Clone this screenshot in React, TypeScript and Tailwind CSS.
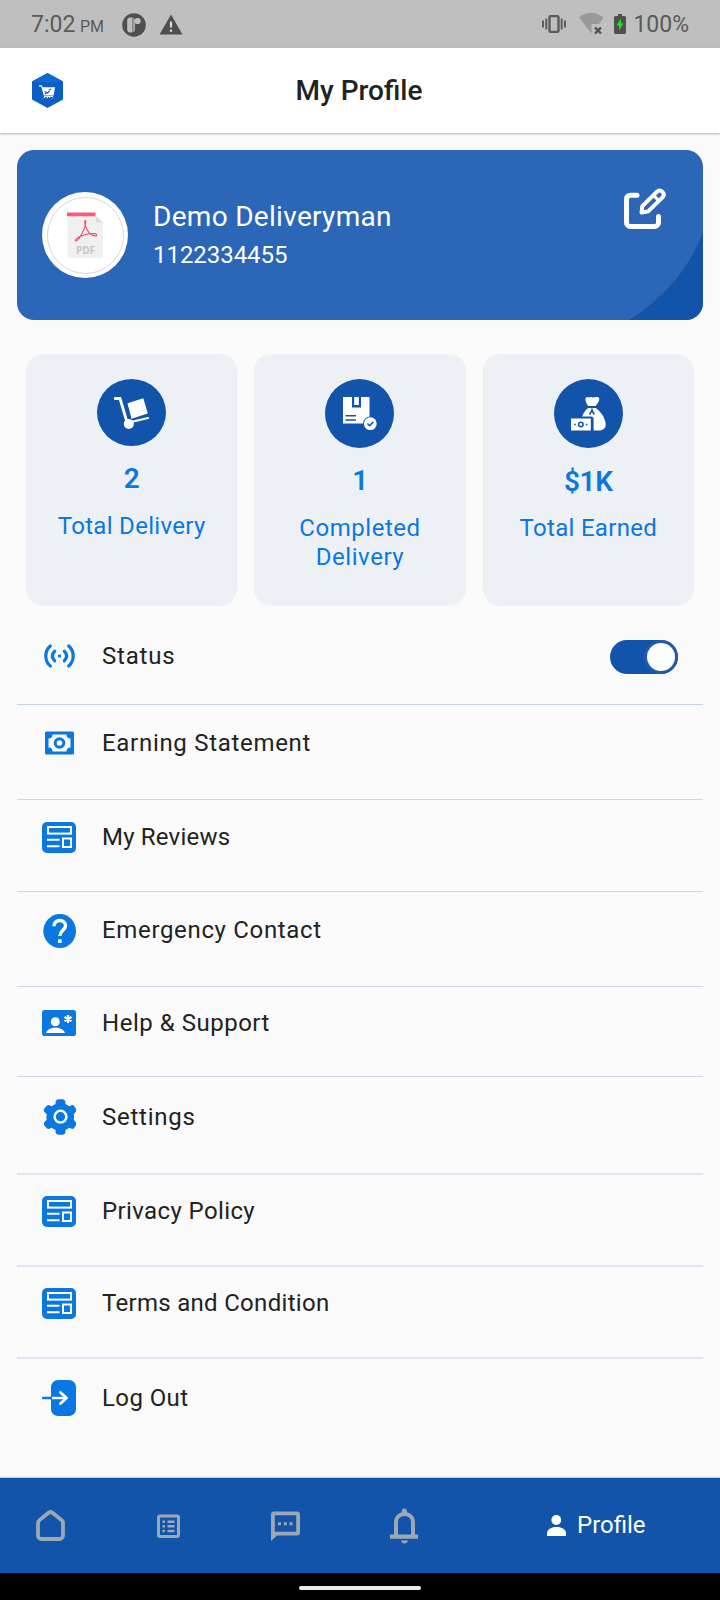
import React, { useState } from 'react';

function LogoIcon() {
  return (
    <svg width="31" height="35" viewBox="0 0 31 35" fill="none">
      <path d="M15.5 0 31 8.5V26.5L15.5 35 0 26.5V8.5Z" fill="#0b5fc4" />
      <path d="M15.5 0 31 8.5 15.5 10 0 8.5Z" fill="#1268cc" />
      <path d="M7 12.2h2.8l.8 2H23l-1.4 8.2H11.8L9.2 13.5H7z" fill="#fff" />
      <path d="m12.500 18.500 2.500 1M15 20.500l2.500-2.500M13 21l1.500-1M17 17l2-1" stroke="#0b5fc4" strokeWidth="1.200" />
      <path d="M12 23.5h9M11.5 25l2-1M15 25.5l1-2M18 25l-1-1M20 25.5l1-1" stroke="#d6e6f8" strokeWidth="1" />
    </svg>
  );
}

function PdfIcon() {
  return (
    <svg width="36" height="47" viewBox="0 0 36 47" fill="none">
      <path d="M.5 4H29l7 6.500V46H.5z" fill="#f0f0f1" />
      <path d="M29 4l7 6.500h-7z" fill="#dcdcdd" />
      <path d="M0 .5h28.500v3.800H0z" fill="#fb5b78" />
      <path
        d="M18.300 8.500c-.9 0-.7 3.200.4 6.200 1.600 4.300 5.200 8.500 9.300 9.200 2.600.3 2.300-2-.4-2.300-4-.4-10.300 1-14.600 3-3.400 1.600-5.400 3.500-4.500 4.300 1.300 1 4.400-3.200 6.800-7.800 2.700-5 4.200-12.600 3-12.600z"
        stroke="#f4496c"
        strokeWidth="1.100"
      />
      <text x="18.500" y="41.500" textAnchor="middle" fontFamily="Open Sans, sans-serif" fontWeight="700" fontSize="10" fill="#c3c6c7">
        PDF
      </text>
    </svg>
  );
}

function EditIcon() {
  return (
    <svg width="42" height="42" viewBox="0 0 42 42" fill="none" stroke="#fff" strokeLinecap="round" strokeLinejoin="round">
      <path d="M13 7.200H6.500a4 4 0 0 0-4 4V34.500a4 4 0 0 0 4 4H30.500a4 4 0 0 0 4-4V28.500" strokeWidth="5" />
      <path d="M17.500 24.500l.8-6.300L33.200 3.500a4 4 0 0 1 5.600 5.600L23.900 23.600z" strokeWidth="4" />
      <path d="M29.800 7.600l5 5" strokeWidth="3" />
    </svg>
  );
}

function TrolleyIcon() {
  return (
    <svg width="35" height="32" viewBox="0 0 35 32" fill="none">
      <path d="M1 1.500h5l6.500 22" stroke="#fff" strokeWidth="2.800" strokeLinecap="round" />
      <path d="M13.500 6.300 29.300 1.200 33.800 16.500 17.500 21.800z" fill="#fff" />
      <circle cx="14.800" cy="27" r="5" fill="#fff" />
      <path d="M16 25.200 34 21" stroke="#fff" strokeWidth="2.200" strokeLinecap="round" />
    </svg>
  );
}

function PackageIcon() {
  return (
    <svg width="36" height="35" viewBox="0 0 36 35" fill="none">
      <path d="M1 1h9v10.500h9V1h8.500v19.500a7.500 7.500 0 0 0-6.500 7H1z" fill="#fff" />
      <path d="M12.200 1h4.600v8h-4.600z" fill="#fff" />
      <path d="M3.500 19.800h10.500M3.500 24h10.500" stroke="#1354ab" strokeWidth="1.500" />
      <circle cx="28.300" cy="27.700" r="6.400" fill="#fff" />
      <path d="m25.400 27.500 2.200 2.200 3.800-3.800" stroke="#1354ab" strokeWidth="1.600" />
    </svg>
  );
}

function MoneyBagIcon() {
  return (
    <svg width="36" height="36" viewBox="0 0 36 36" fill="none">
      <path d="M15.500 2.500c0-1.600 2-1.600 3.500-1 1.500-.8 3-.8 4.300 0 1.300-.6 6-1 6 1.200 0 3-2.300 5.500-3.800 7.300h-7.200c-1.600-2-3.100-4.500-2.800-7.500z" fill="#fff" />
      <path d="M18.300 12h7.500c5 3.500 9.900 10.500 9.900 16.500 0 4-3 6-7.500 6h-4.600V23a2.500 2.500 0 0 0-2.500-2.500h-9c1.500-4 3.500-6.500 6.200-8.500z" fill="#fff" />
      <path d="M22 12.500v2l-2.500 4M22 14.500l2.300 4" stroke="#1354ab" strokeWidth="1.600" />
      <path d="M1 22.500h19.800v12H1z" fill="#fff" />
      <circle cx="10.800" cy="28.500" r="2.200" stroke="#1354ab" strokeWidth="1.600" />
      <path d="M4.200 28.500h1.600M15.800 28.500h1.600" stroke="#1354ab" strokeWidth="1.600" />
    </svg>
  );
}

function StatusIcon() {
  return (
    <svg width="34" height="24" viewBox="0 0 34 24" fill="none" stroke="#0a78e0" strokeWidth="3.200" strokeLinecap="round">
      <path d="M8.300 2C2.300 7 2.300 17 8.300 22M26.700 2c6 5 6 15 0 20" />
      <path d="M12.700 7.200c-2.900 3-2.900 6.600 0 9.600M22.300 7.200c2.900 3 2.900 6.600 0 9.600" />
      <path d="M16.100 10.600h2.900v2.900h-2.900z" fill="#0a78e0" stroke="none" />
    </svg>
  );
}

function EarningIcon() {
  return (
    <svg width="34" height="24" viewBox="0 0 34 24" fill="none">
      <rect x="3" y=".5" width="29" height="23" rx="1.500" fill="#0a78e0" />
      <path d="M10.500 3.500h14a4 4 0 0 0 4 4v9a4 4 0 0 0-4 4h-14a4 4 0 0 0-4-4v-9a4 4 0 0 0 4-4z" fill="#fafafa" />
      <circle cx="17.500" cy="12" r="4.300" stroke="#0a78e0" strokeWidth="3" />
    </svg>
  );
}

function ReviewIcon() {
  return (
    <svg width="34" height="31" viewBox="0 0 34 31" fill="none" stroke="#fff">
      <rect width="34" height="31" rx="5" fill="#0a78e0" stroke="none" />
      <rect x="6" y="5" width="23" height="6.600" strokeWidth="2" />
      <path d="M5 17.800h12.500M5 24.300h12.500" strokeWidth="2" />
      <rect x="21" y="16.500" width="8" height="8.500" strokeWidth="2" />
    </svg>
  );
}

function QuestionIcon() {
  return (
    <svg className="mt-[2px]" width="34" height="34" viewBox="0 0 34 34" fill="none">
      <path d="M18 0C27 0 34 7.600 34 17s-7 17-16 17S1.300 26.400 1.300 17 9 0 18 0z" fill="#0a78e0" />
      <path d="M12 12.200c0-3.400 2.400-5.700 5.800-5.700 3.300 0 5.700 2.200 5.700 5.200 0 4.300-5.700 5-5.700 10.300" stroke="#fff" strokeWidth="3.400" />
      <path d="M16 25.300h3.600v3.500H16z" fill="#fff" />
    </svg>
  );
}

function ContactCardIcon() {
  return (
    <svg width="34" height="26" viewBox="0 0 34 26" fill="none">
      <rect width="34" height="26" rx="2.800" fill="#0a78e0" />
      <circle cx="13.300" cy="11.700" r="4.500" fill="#fff" />
      <path d="M4 23c1-3.600 5-5.300 9.300-5.300S21.800 19.400 23 23z" fill="#fff" />
      <path d="M26 5v8M22.500 7l7 4M29.500 7l-7 4" stroke="#fff" strokeWidth="2.200" />
    </svg>
  );
}

function SettingsIcon() {
  return (
    <svg width="34" height="36" viewBox="0 0 34 36" fill="none">
      <path
        d="M15.600.3h5.800l2 1.600v3.200c1.400.5 2.700 1.300 3.800 2.200l3-1.300 1.700.5L34 10v2.600l-2.200 2.600c.3 1.800.3 3.800 0 5.600L34 23.400V26l-2.100 3.500-1.700.5-3-1.300a12 12 0 0 1-3.800 2.200v3.200l-2 1.600h-5.800l-2-1.600v-3.200a12 12 0 0 1-3.800-2.200l-3 1.300-1.900-.5L2 26v-2.600l2.700-2.600a14 14 0 0 1 0-5.600L2 12.600V10l2.900-3.500 1.900-.5 3 1.300a12 12 0 0 1 3.800-2.200V1.900z"
        fill="#0a78e0"
      />
      <circle cx="18.500" cy="17.700" r="5.900" stroke="#fff" strokeWidth="2.500" />
    </svg>
  );
}

function LogoutIcon() {
  return (
    <svg width="34" height="36" viewBox="0 0 34 36" fill="none" strokeLinecap="round" strokeLinejoin="round">
      <rect x="9" width="25" height="36" rx="7" fill="#0a78e0" />
      <path d="M1 18h9" stroke="#0a78e0" strokeWidth="2.400" />
      <path d="M10 18h15" stroke="#fff" strokeWidth="2.400" strokeLinecap="butt" />
      <path d="m18.500 12.500 6 5.500-6 5.500" stroke="#fff" strokeWidth="2.800" />
    </svg>
  );
}

const stats = [
  { icon: <TrolleyIcon />, value: '2', label: 'Total Delivery', circle: 'h-[67px]', gap: 'mt-4', labelGap: 'mt-4', tracking: 'tracking-[0.3px]' },
  { icon: <PackageIcon />, value: '1', label: 'Completed Delivery', circle: 'h-[69px]', gap: 'mt-4', labelGap: 'mt-4', tracking: 'tracking-[0.55px]' },
  { icon: <MoneyBagIcon />, value: '$1K', label: 'Total Earned', circle: 'h-[69px]', gap: 'mt-[17px]', labelGap: 'mt-[15px]', tracking: 'tracking-[0.3px]' },
];

const menu = [
  { label: 'Earning Statement', icon: <EarningIcon />, row: 'h-[95px] pt-5 border-b border-[#c9d7e6]', text: 'tracking-[0.7px]' },
  { label: 'My Reviews', icon: <ReviewIcon />, row: 'h-[92px] pt-[19px] border-b border-[#c9d7e6]', text: 'tracking-[0.2px]' },
  { label: 'Emergency Contact', icon: <QuestionIcon />, row: 'h-[95px] pt-5 border-b border-[#ccd5e3]', text: 'tracking-[0.66px]' },
  { label: 'Help & Support', icon: <ContactCardIcon />, row: 'h-[90px] pt-[18px] border-b border-[#ccd5e3]', text: 'tracking-[0.52px]' },
  { label: 'Settings', icon: <SettingsIcon />, row: 'h-[98px] pt-[22px] border-b-2 border-[#dde6f0]', text: 'tracking-[0.75px]' },
  { label: 'Privacy Policy', icon: <ReviewIcon />, row: 'h-[92px] pt-[18px] border-b-2 border-[#dde6f0]', text: 'tracking-[0.38px]' },
  { label: 'Terms and Condition', icon: <ReviewIcon />, row: 'h-[92px] pt-[18px] border-b-2 border-[#dde6f0]', text: 'tracking-[0.3px]' },
  { label: 'Log Out', icon: <LogoutIcon />, row: 'h-[118px] pt-[21px]', text: 'tracking-[0.4px]' },
];

function StatusBar() {
  return (
    <div className="flex h-12 items-center bg-[#bfbfbf] pl-[31px] pr-[31px] pt-[2px] text-[#5a5a5a]">
      <span className="w-[49px] text-[23px] leading-[28px]">7:02</span>
      <span className="mt-[5px] w-10 text-[16px] leading-[20px]">PM</span>
      <svg className="ml-[2px]" width="24" height="24" viewBox="0 0 24 24">
        <circle cx="12" cy="12" r="11.800" fill="#4f4f4f" />
        <path d="M8.200 4.500h1.600a3 3 0 0 1 3 3v9a3 3 0 0 1-3 3H8.200a3 3 0 0 1-3-3v-9a3 3 0 0 1 3-3z" fill="#bfbfbf" />
        <circle cx="15.600" cy="8" r="3.100" fill="#bfbfbf" />
        <path d="M10.900 4v16" stroke="#4f4f4f" strokeWidth=".8" />
      </svg>
      <svg className="ml-[13px]" width="24" height="21" viewBox="0 0 24 21">
        <path d="M12 .5 23.500 20.500H.5z" fill="#4f4f4f" />
        <path d="M10.900 7.500h2.200v6h-2.200zM10.900 15.500h2.200v2.300h-2.200z" fill="#d8d8d8" />
      </svg>
      <svg className="mb-[2px] ml-auto" width="24" height="18" viewBox="0 0 24 18" fill="none" stroke="#5c5c5c">
        <rect x="7.500" y="1" width="9" height="16" rx="1.500" strokeWidth="2.400" />
        <path d="M4.300 3.500v11M19.700 3.500v11" strokeWidth="2" />
        <path d="M1 5.500v7M23 5.500v7" strokeWidth="2" />
      </svg>
      <svg className="mb-[2px] ml-3" width="26" height="24" viewBox="0 0 26 24" fill="none">
        <path d="M1 5.500C8-1 18-1 25.500 5.500L21 12h-7.500v9.500z" fill="#999" />
        <path d="m17 15.500 6 6M23 15.500l-6 6" stroke="#4f4f4f" strokeWidth="2.400" />
      </svg>
      <svg className="mb-[2px] ml-[10px]" width="12" height="20" viewBox="0 0 12 20">
        <path d="M4 0h4v2h2.500A1.500 1.500 0 0 1 12 3.500v15a1.500 1.500 0 0 1-1.500 1.500h-9A1.500 1.500 0 0 1 0 18.500v-15A1.500 1.500 0 0 1 1.500 2H4z" fill="#4f4f4f" />
        <path d="M7 4.500 2.500 11.500H5v5L9.500 9.500H7z" fill="#1fe01f" />
      </svg>
      <span className="ml-[7px] text-[23px] leading-[28px]">100%</span>
    </div>
  );
}

function ProfileCard() {
  return (
    <div className="relative mx-[17px] mt-4 flex h-[170px] items-center overflow-hidden rounded-[17px] bg-[#2c66b6]">
      <svg className="absolute bottom-0 right-0" width="74" height="87" viewBox="0 0 74 87">
        <path d="M74 0A180 180 0 0 1 0 87H74z" fill="#1354ab" />
      </svg>
      <div className="ml-[25px] flex h-[86px] w-[86px] items-center justify-center rounded-full bg-white">
        <div className="flex h-[77px] w-[77px] items-center justify-center rounded-full border border-[#d5d5e6]">
          <PdfIcon />
        </div>
      </div>
      <div className="mb-[2px] ml-[25px] text-white">
        <p className="text-[28px] leading-[34px] tracking-[0.3px]">Demo Deliveryman</p>
        <p className="mt-[7px] text-[24px] leading-[28px] tracking-[-0.05px]">1122334455</p>
      </div>
      <button className="mb-[53px] ml-auto mr-[37px]">
        <EditIcon />
      </button>
    </div>
  );
}

function BottomNav() {
  return (
    <nav className="flex h-[96px] items-center border-t border-[#b9cde6] bg-[#1354ab]">
      <svg className="ml-9" width="30" height="31" viewBox="0 0 30 31" fill="none">
        <path d="M2 13.200v12.300a3.500 3.500 0 0 0 3.500 3.500h18a3.500 3.500 0 0 0 3.500-3.500V13.200a4 4 0 0 0-1.500-3.100L16.800 3a3.500 3.500 0 0 0-4.600 0L3.500 10.100A4 4 0 0 0 2 13.200z" stroke="#9ca8b3" strokeWidth="3.800" />
      </svg>
      <svg className="ml-[91px]" width="23" height="24" viewBox="0 0 23 24" fill="none" stroke="#9ca8b3">
        <rect x="1.500" y="2" width="20" height="20.500" rx="1.500" strokeWidth="3" />
        <path d="M5.500 7.700h2.500M5.500 12.300h2.500M5.500 17h2.500M10.500 7.700h7M10.500 12.300h7M10.500 17h7" strokeWidth="2.500" />
      </svg>
      <svg className="ml-[91px]" width="29" height="30" viewBox="0 0 29 30" fill="none">
        <path d="M3 .5h23a3 3 0 0 1 3 3v18a3 3 0 0 1-3 3H6L0 30V3.500a3 3 0 0 1 3-3zM3.800 4.300v16.400h21.400V4.300z" fill="#9ca8b3" fillRule="evenodd" />
        <path d="M7 12.700h3M12.800 12.700h3M18.500 12.700h3" stroke="#9ca8b3" strokeWidth="3" />
      </svg>
      <svg className="ml-[90px]" width="28" height="36" viewBox="0 0 28 36" fill="none">
        <path d="M6 28V14.500C6 9.500 9.500 6 14.500 6s8.500 3.500 8.500 8.500V28" stroke="#9ca8b3" strokeWidth="4" />
        <path d="M0 26.500h28v4.300H0zM11.700 3.200a2.600 2.600 0 0 1 5.200 0V6h-5.200zM11 32.500h7c-.5 2-1.700 3-3.500 3s-3-1-3.500-3z" fill="#9ca8b3" />
      </svg>
      <svg className="mb-px ml-[129px]" width="19" height="21" viewBox="0 0 19 21" fill="#fff">
        <circle cx="9.300" cy="5" r="4.900" />
        <path d="M0 21v-2.500C0 14.500 4 12 9.500 12s9.500 2.500 9.500 6.500V21z" />
      </svg>
      <span className="mb-[2px] ml-[11px] text-[24px] leading-[28px] text-white">Profile</span>
    </nav>
  );
}

export default function App() {
  const [online, setOnline] = useState(true);

  return (
    <div className="flex h-[1600px] w-[720px] flex-col overflow-hidden bg-[#fafafa] font-['Roboto',sans-serif]">
      <StatusBar />

      <header className="relative flex h-[86px] items-center justify-center bg-white pr-[2px] pt-px shadow-[0_1px_2px_rgba(0,0,0,0.3)]">
        <div className="absolute left-8 top-[25px]">
          <LogoIcon />
        </div>
        <h1 className="text-[28px] font-medium leading-[34px] text-[#222]">My Profile</h1>
      </header>

      <main className="flex-1 pt-px">
        <ProfileCard />

        <div className="mx-[26px] mt-[34px] flex gap-[17px]">
          {stats.map((s) => (
            <div key={s.label} className="flex h-[252px] flex-1 flex-col items-center rounded-[17px] bg-[#edf1f6] px-4 pt-[25px] text-[#0a78e0]">
              <div className={`flex w-[69px] shrink-0 items-center justify-center rounded-[50%] bg-[#1354ab] ${s.circle}`}>{s.icon}</div>
              <p className={`text-[28px] font-semibold leading-[34px] tracking-[-0.3px] ${s.gap}`}>{s.value}</p>
              <p className={`text-center text-[24px] leading-[29px] ${s.labelGap} ${s.tracking}`}>{s.label}</p>
            </div>
          ))}
        </div>

        <div className="mx-[17px]">
          <div className="flex h-[99px] items-start border-b border-[#c9d3e0] pl-[25px] pr-[25px] pt-8">
            <div className="flex h-9 w-[34px] items-center justify-center">
              <StatusIcon />
            </div>
            <span className="ml-[26px] text-[24px] leading-[36px] tracking-[0.8px] text-[#222]">Status</span>
            <button
              onClick={() => setOnline(!online)}
              className={`ml-auto mt-[2px] flex h-[34px] w-[68px] items-center rounded-full bg-[#1354ab] px-[3px] ${online ? 'justify-end' : 'justify-start'}`}
            >
              <span className="h-7 w-7 rounded-full bg-white shadow-[0_0_0_3px_#2459a8]" />
            </button>
          </div>
          {menu.map((m) => (
            <div key={m.label} className={`flex items-start pl-[25px] ${m.row}`}>
              <div className="flex h-9 w-[34px] items-center justify-center">{m.icon}</div>
              <span className={`ml-[26px] text-[24px] leading-[36px] text-[#222] ${m.text}`}>{m.label}</span>
            </div>
          ))}
        </div>
      </main>

      <BottomNav />

      <div className="flex h-[27px] shrink-0 justify-center bg-black pt-[13px]">
        <div className="h-1 w-[122px] rounded-full bg-[#ececec]" />
      </div>
    </div>
  );
}
